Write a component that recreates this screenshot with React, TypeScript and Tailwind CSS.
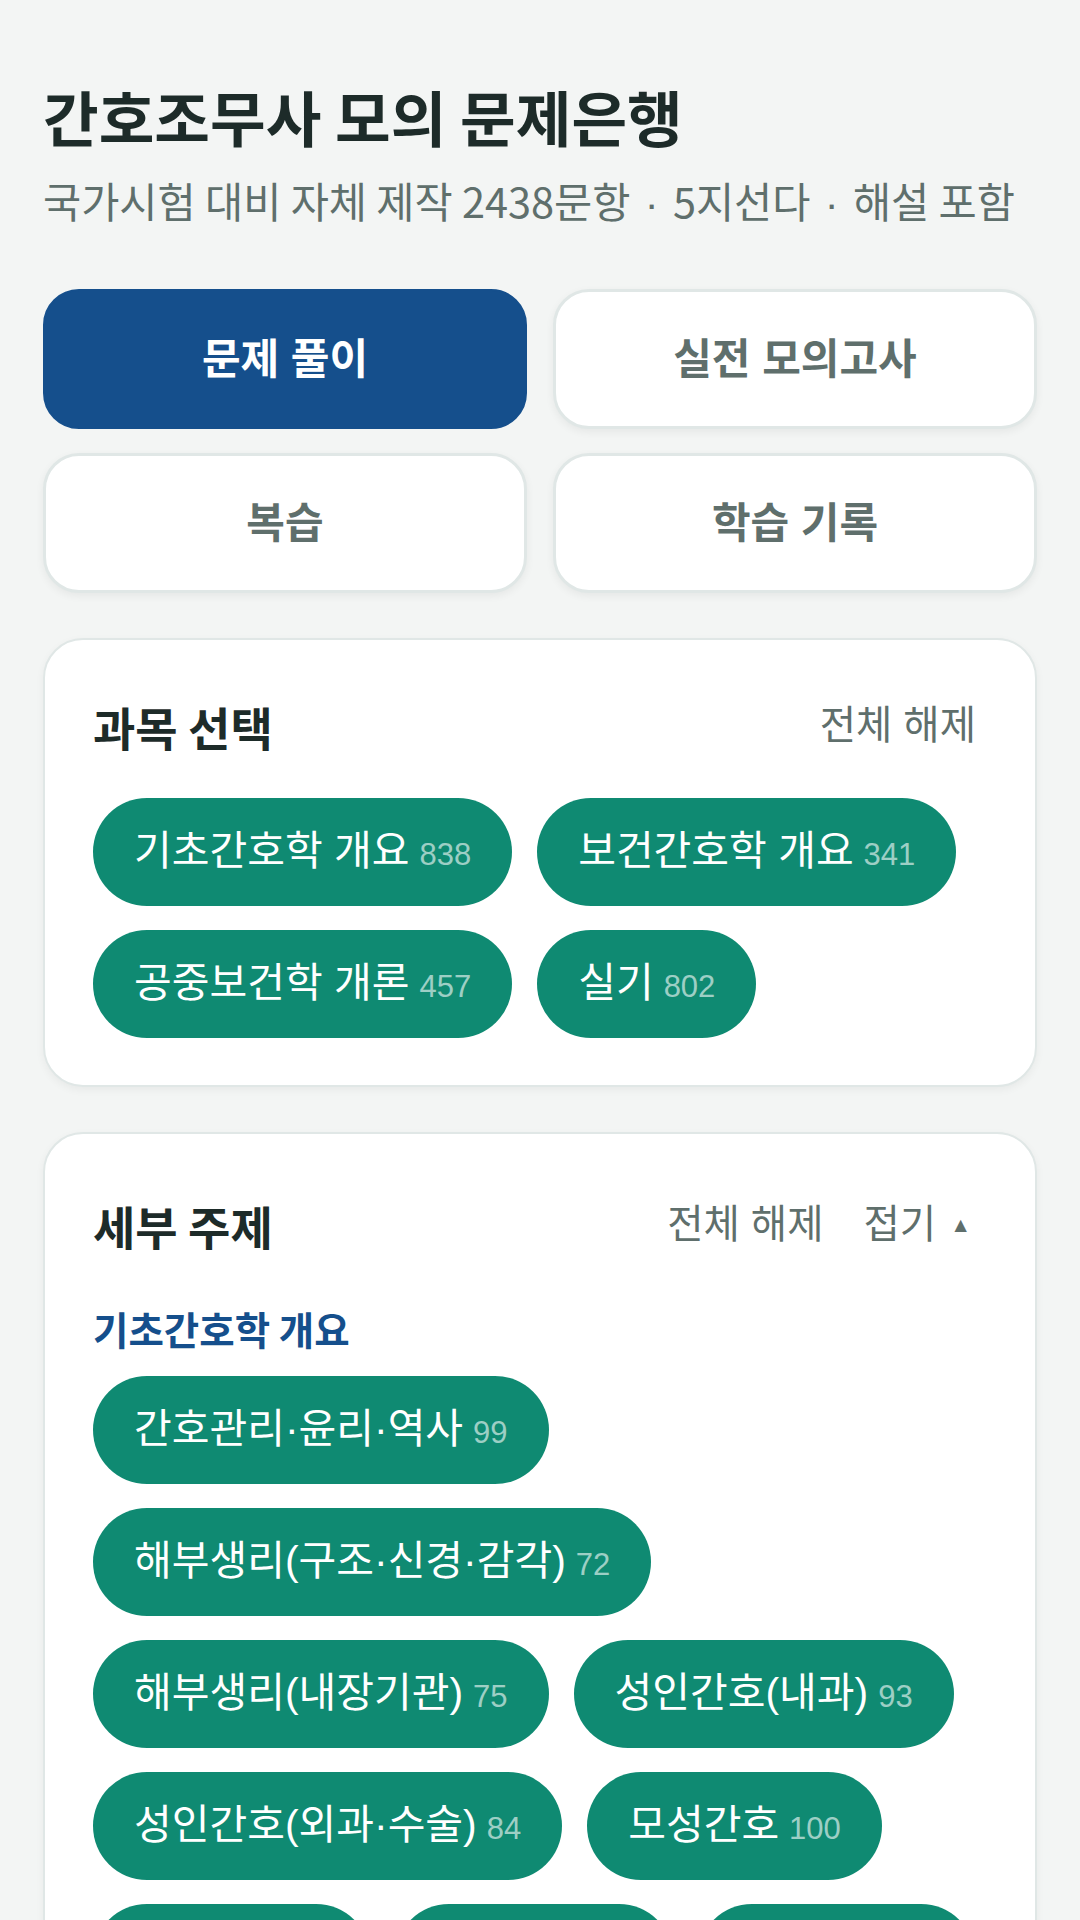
import React from "react";

type Item = { name: string; count: number };

const subjects: Item[] = [
  { name: "기초간호학 개요", count: 838 },
  { name: "보건간호학 개요", count: 341 },
  { name: "공중보건학 개론", count: 457 },
  { name: "실기", count: 802 },
];

const topics: Item[] = [
  { name: "간호관리·윤리·역사", count: 99 },
  { name: "해부생리(구조·신경·감각)", count: 72 },
  { name: "해부생리(내장기관)", count: 75 },
  { name: "성인간호(내과)", count: 93 },
  { name: "성인간호(외과·수술)", count: 84 },
  { name: "모성간호", count: 100 },
  { name: "아동간호", count: 96 },
  { name: "노인간호", count: 88 },
  { name: "응급간호", count: 97 },
];

const btnFont = "font-['Liberation_Sans','Noto_Sans_CJK_SC',sans-serif]";

function Chip({ item }: { item: Item }) {
  return (
    <button
      type="button"
      className={`flex h-[108px] items-center rounded-full bg-[#0f8a72] px-[41px] text-[41px] text-white ${btnFont}`}
    >
      <span>{item.name}</span>
      <span className="ml-[10px] mt-[6px] text-[31px] text-white/60">{item.count}</span>
    </button>
  );
}

function NavButton({ label, active }: { label: string; active?: boolean }) {
  return (
    <button
      type="button"
      className={
        active
          ? `h-[140px] rounded-[36px] border-2 border-[#154f8c] bg-[#154f8c] text-[42px] font-bold text-white ${btnFont}`
          : `h-[140px] rounded-[36px] border-[3px] border-[#e0e7e6] bg-white text-[42px] font-bold text-[#5f6f6c] shadow-[0_3px_8px_rgba(0,0,0,0.06)] ${btnFont}`
      }
    >
      {label}
    </button>
  );
}

export default function App() {
  return (
    <div className="min-h-screen bg-[#f3f5f4] px-[43px] pb-10 pt-[80px] font-['Noto_Sans_CJK_SC',sans-serif]">
      {/* Header */}
      <h1 className="text-[60.5px] font-bold leading-[72px] text-[#1d2b29]">간호조무사 모의 문제은행</h1>
      <p className="mt-[20px] text-[41.5px] leading-[56px] text-[#5f6f6c]">
        국가시험 대비 자체 제작 2438문항 <span className="mx-[5px] font-['Liberation_Sans']">·</span> 5지선다{" "}
        <span className="mx-[5px] font-['Liberation_Sans']">·</span> 해설 포함
      </p>

      {/* Mode buttons */}
      <div className="mt-[57px] grid grid-cols-2 gap-x-[26px] gap-y-[24px]">
        <NavButton label="문제 풀이" active />
        <NavButton label="실전 모의고사" />
        <NavButton label="복습" />
        <NavButton label="학습 기록" />
      </div>

      {/* Subject select */}
      <section className="mt-[45px] rounded-[40px] border-2 border-[#e0e7e6] bg-white px-[48px] pb-[47px] pt-[53px] shadow-[0_3px_8px_rgba(0,0,0,0.05)]">
        <div className="flex items-center justify-between pr-[11px]">
          <h2 className="text-[46px] font-bold leading-[66px] text-[#1d2b29]">과목 선택</h2>
          <button type="button" className={`text-[39.5px] text-[#5f6f6c] ${btnFont}`}>
            전체 해제
          </button>
        </div>
        <div className="mt-[39px] flex flex-wrap gap-x-[25px] gap-y-[24px]">
          {subjects.map((s) => (
            <Chip key={s.name} item={s} />
          ))}
        </div>
      </section>

      {/* Topic select */}
      <section className="mt-[45px] rounded-[40px] border-2 border-[#e0e7e6] bg-white px-[48px] pb-[47px] pt-[58px] shadow-[0_3px_8px_rgba(0,0,0,0.05)]">
        <div className="flex items-center justify-between pr-[16px]">
          <h2 className="text-[46px] font-bold leading-[66px] text-[#1d2b29]">세부 주제</h2>
          <div className={`flex items-center gap-[40px] text-[39.5px] text-[#5f6f6c] ${btnFont}`}>
            <button type="button">전체 해제</button>
            <button type="button" className="flex items-center gap-[14px]">
              접기 <span className="text-[21px]">▲</span>
            </button>
          </div>
        </div>
        <h3 className="mt-[42px] text-[38.5px] font-bold leading-[56px] text-[#154f8c]">기초간호학 개요</h3>
        <div className="mt-[20px] flex flex-wrap gap-x-[25px] gap-y-[24px]">
          {topics.map((t) => (
            <Chip key={t.name} item={t} />
          ))}
        </div>
      </section>
    </div>
  );
}
